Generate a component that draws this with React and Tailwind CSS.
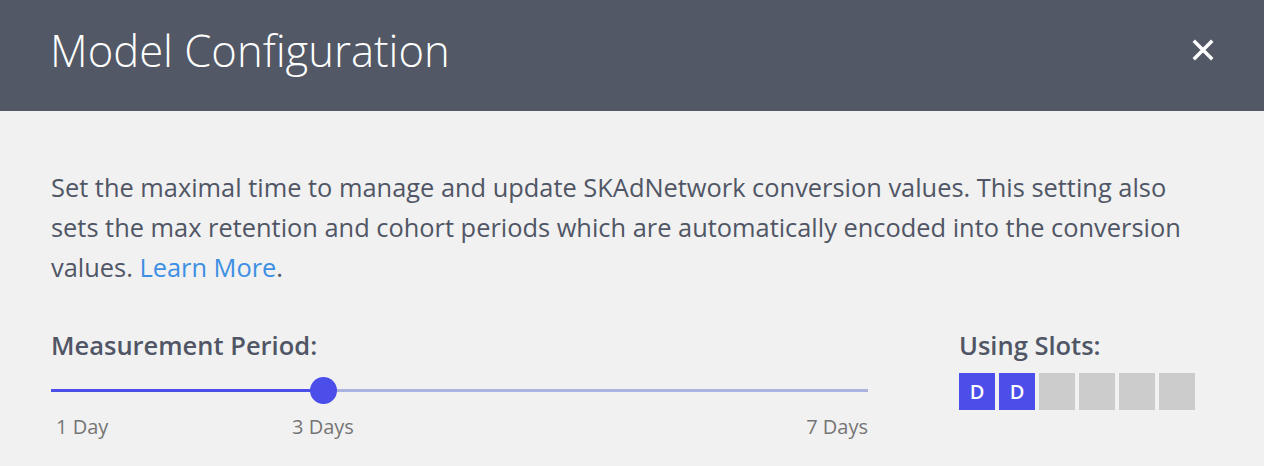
import React from 'react';

const slots = ['D', 'D', '', '', '', ''];

const App = () => {
  const value = 3;
  const pct = ((value - 1) / 6) * 100;

  return (
    <div className="w-[1264px] h-[466px] bg-[#f1f1f1] font-['Open_Sans',sans-serif] overflow-hidden">
      {/* Header */}
      <div className="h-[111px] bg-[#525865] flex items-center justify-between pl-[50px] pr-[50px] pb-[12px]">
        <h1 className="text-[43.6px] font-light text-white leading-[58px]">Model Configuration</h1>
        <button className="text-white">
          <svg width="22" height="22" viewBox="0 0 22 22">
            <path d="M3 3 L19 19 M19 3 L3 19" stroke="white" strokeWidth="3.5" strokeLinecap="square" />
          </svg>
        </button>
      </div>

      {/* Body */}
      <div className="px-[51px] pt-[56px]">
        <p className="w-[1150px] text-[25.4px] leading-[40px] text-[#505665]">
          Set the maximal time to manage and update SKAdNetwork conversion values. This setting also
          sets the max retention and cohort periods which are automatically encoded into the conversion
          values. <a className="text-[#3c8fe3]">Learn More</a>.
        </p>

        <div className="flex mt-[43px]">
          <div className="w-[817px]">
            <div className="text-[25.5px] font-semibold text-[#505665] leading-[30px]">Measurement Period:</div>
            <div className="relative h-[30px] mt-[16px]">
              <div className="absolute left-0 right-0 top-[13px] h-[3px] bg-[#aab3de]" />
              <div className="absolute left-0 top-[13px] h-[3px] bg-[#4b4ee9]" style={{ width: `${pct}%` }} />
              <div
                className="absolute top-[1px] w-[27px] h-[27px] -ml-[13px] rounded-full bg-[#4b4ee9]"
                style={{ left: `${pct}%` }}
              />
            </div>
            <div className="flex text-[20px] text-[#757575] mt-[8px] leading-[26px]">
              <span className="w-[241px] pl-[5px]">1 Day</span>
              <span>3 Days</span>
              <span className="ml-auto">7 Days</span>
            </div>
          </div>

          <div className="ml-[91px]">
            <div className="text-[25.5px] font-semibold text-[#505665] leading-[30px]">Using Slots:</div>
            <div className="flex gap-[4px] mt-[13px]">
              {slots.map((s, i) => (
                <div
                  key={i}
                  className={`w-[36px] h-[37px] flex items-center justify-center text-[20px] font-semibold text-white ${s ? 'bg-[#4b4ee9]' : 'bg-[#cccccc]'}`}
                >
                  {s}
                </div>
              ))}
            </div>
          </div>
        </div>
      </div>
    </div>
  );
};

export default App;
